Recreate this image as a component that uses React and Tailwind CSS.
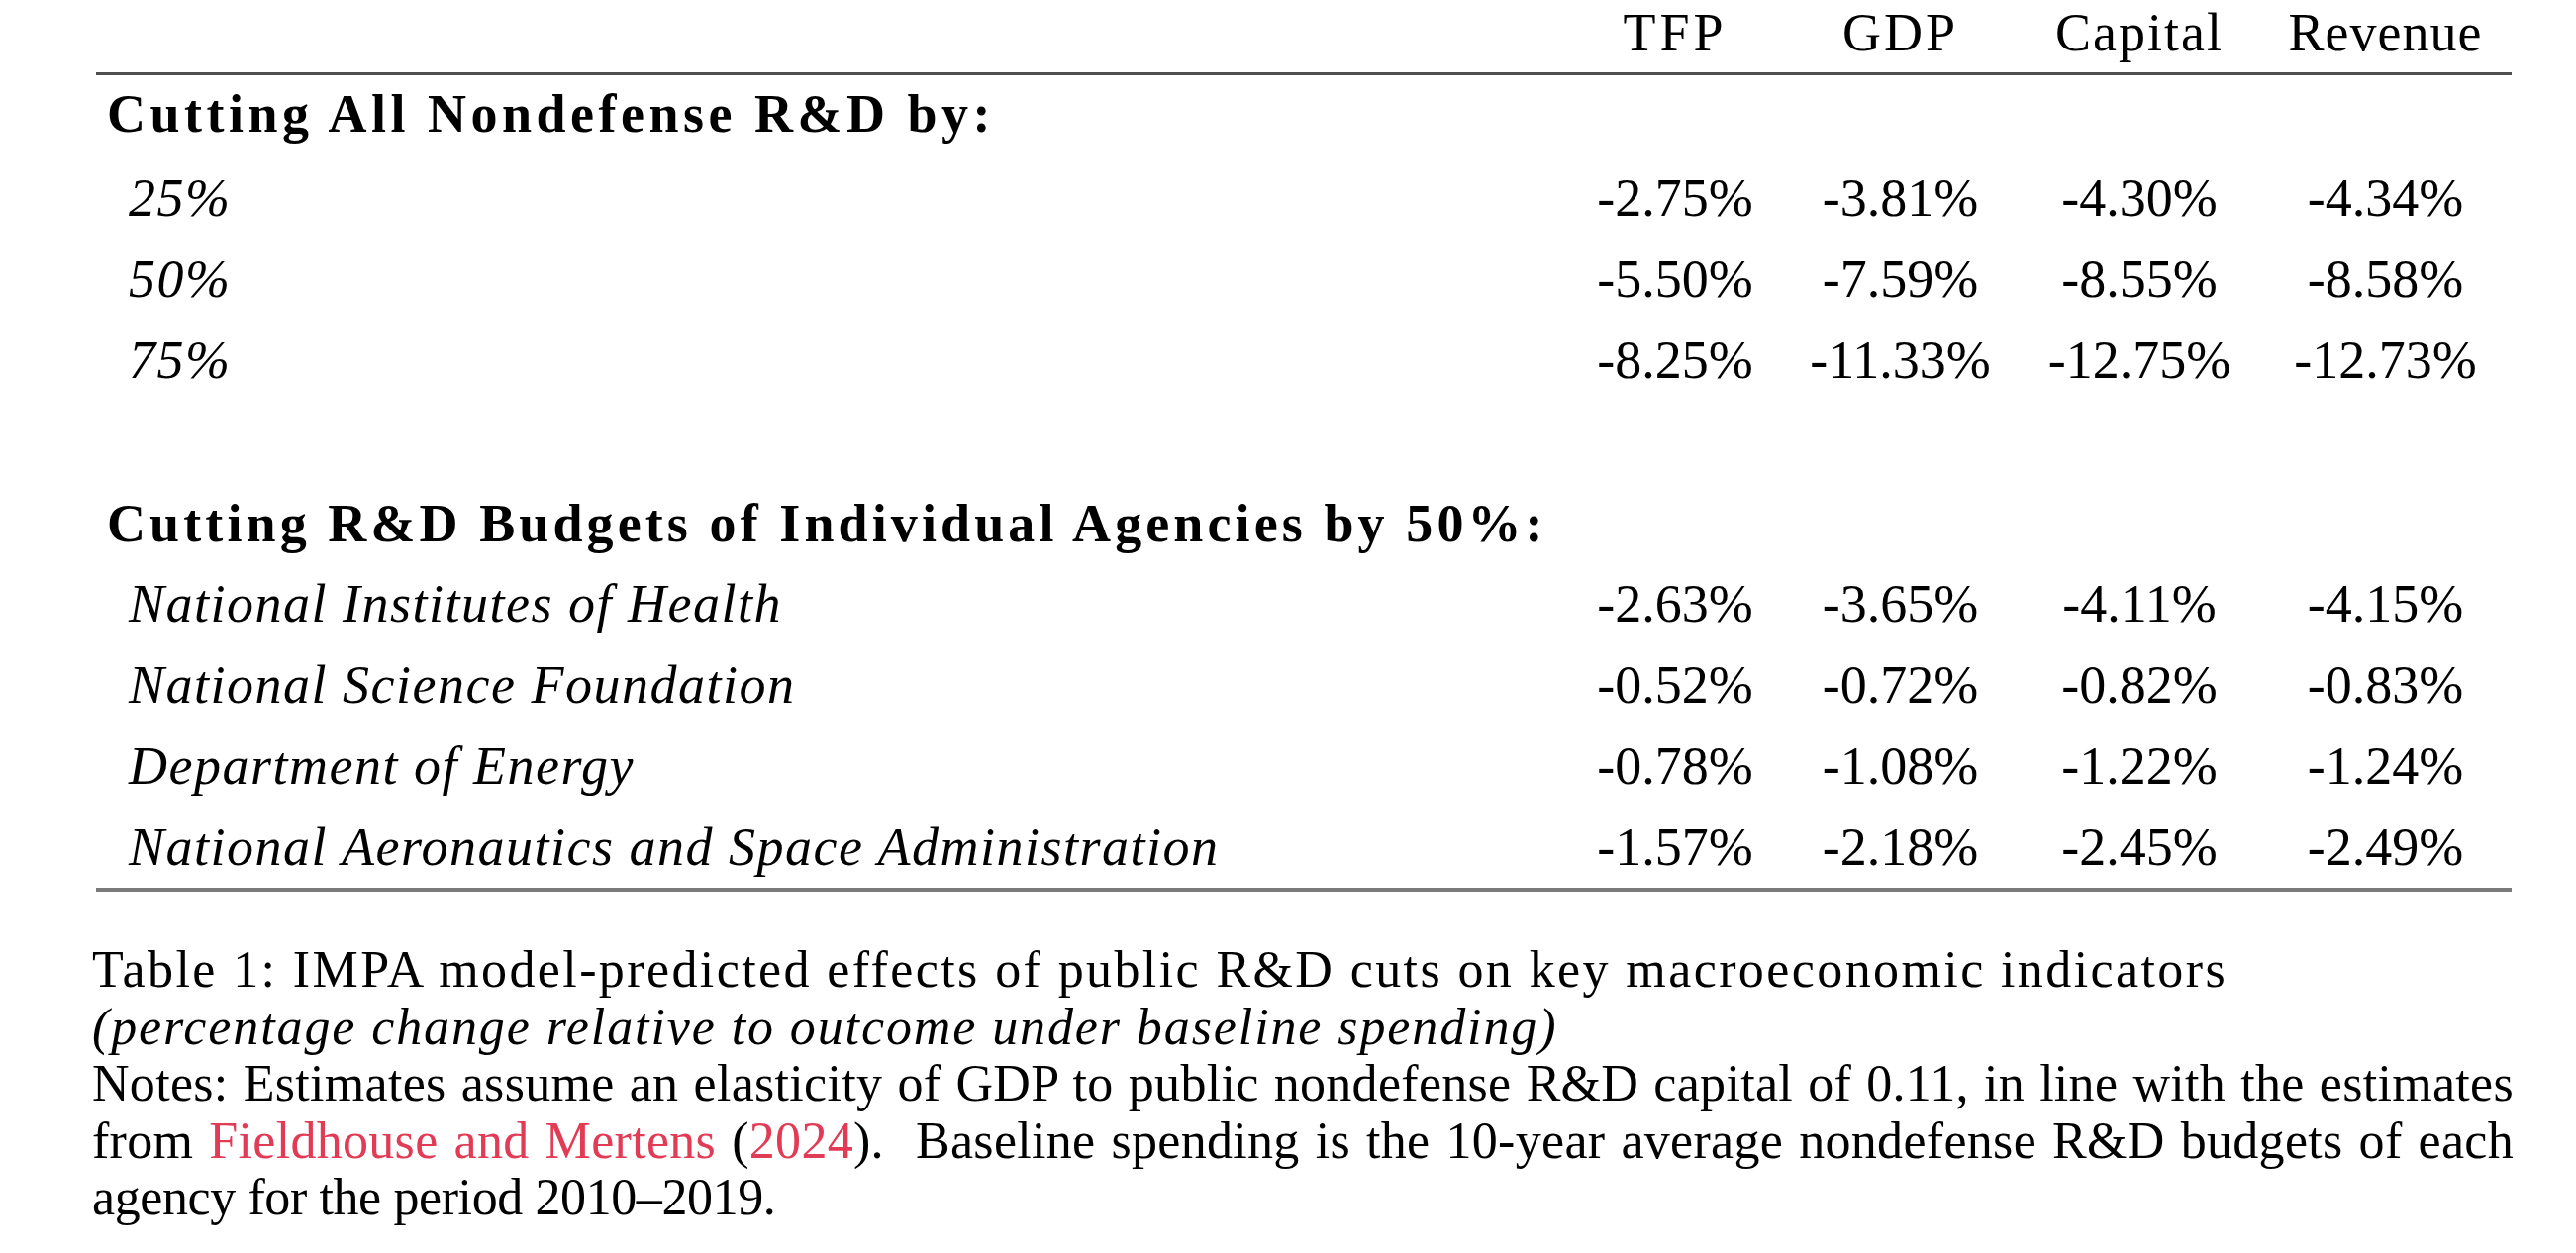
import React from 'react';

const allCuts = [
  { label: '25%', values: ['-2.75%', '-3.81%', '-4.30%', '-4.34%'] },
  { label: '50%', values: ['-5.50%', '-7.59%', '-8.55%', '-8.58%'] },
  { label: '75%', values: ['-8.25%', '-11.33%', '-12.75%', '-12.73%'] },
];

const agencyCuts = [
  { label: 'National Institutes of Health', values: ['-2.63%', '-3.65%', '-4.11%', '-4.15%'] },
  { label: 'National Science Foundation', values: ['-0.52%', '-0.72%', '-0.82%', '-0.83%'] },
  { label: 'Department of Energy', values: ['-0.78%', '-1.08%', '-1.22%', '-1.24%'] },
  { label: 'National Aeronautics and Space Administration', values: ['-1.57%', '-2.18%', '-2.45%', '-2.49%'] },
];

// column grid: label column then the four centred number columns
const grid = 'grid grid-cols-[1488px_214px_241px_242px_255px]';

const DataRow = ({ row }) => (
  <div className={`${grid} h-[82px] leading-[82px]`}>
    <div className="pl-[33px] italic tracking-[1.5px]">{row.label}</div>
    {row.values.map((v, i) => (
      <div key={i} className="text-center">{v}</div>
    ))}
  </div>
);

const SectionRow = ({ className, children }) => (
  <div className={`${className} leading-[78px] pl-[11px] font-bold`}>{children}</div>
);

const App = () => {
  return (
    <div className="min-h-screen bg-white text-black font-['Liberation_Serif',serif]">
      <div className="ml-[97px] w-[2440px] text-[54px]">
        {/* header */}
        <div className={`${grid} h-[73px] pb-[7px] leading-[66px]`}>
          <div></div>
          <div className="text-center tracking-[4px]">TFP</div>
          <div className="text-center tracking-[3px]">GDP</div>
          <div className="text-center tracking-[2px]">Capital</div>
          <div className="text-center tracking-[1px]">Revenue</div>
        </div>
        <div className="h-[3px] bg-[#505050]"></div>

        <SectionRow className="h-[83px] tracking-[4.5px]">Cutting All Nondefense R&amp;D by:</SectionRow>
        {allCuts.map((r) => (
          <DataRow key={r.label} row={r} />
        ))}
        <div className="h-[85px]"></div>

        <SectionRow className="h-[79px] tracking-[4.1px]">Cutting R&amp;D Budgets of Individual Agencies by 50%:</SectionRow>
        {agencyCuts.map((r) => (
          <DataRow key={r.label} row={r} />
        ))}
        <div className="h-[4px] bg-[#7a7a7a]"></div>
      </div>

      {/* caption and notes */}
      <div className="ml-[93px] mt-[50px] w-[2446px] text-[52px] leading-[57.5px]">
        <div className="tracking-[2.4px]">Table 1: IMPA model-predicted effects of public R&amp;D cuts on key macroeconomic indicators</div>
        <div className="italic tracking-[1.9px]">(percentage change relative to outcome under baseline spending)</div>
        <div className="whitespace-nowrap tracking-[0.3px] text-justify [text-align-last:justify]">
          Notes: Estimates assume an elasticity of GDP to public nondefense R&amp;D capital of 0.11, in line with the estimates
        </div>
        <div className="whitespace-nowrap tracking-[0.3px] text-justify [text-align-last:justify]">
          from <span className="text-[#e23b55]">Fieldhouse and Mertens</span> (<span className="text-[#e23b55]">2024</span>).&nbsp; Baseline spending is the 10-year average nondefense R&amp;D budgets of each
        </div>
        <div className="tracking-[-0.4px]">agency for the period 2010–2019.</div>
      </div>
    </div>
  );
};

export default App;
